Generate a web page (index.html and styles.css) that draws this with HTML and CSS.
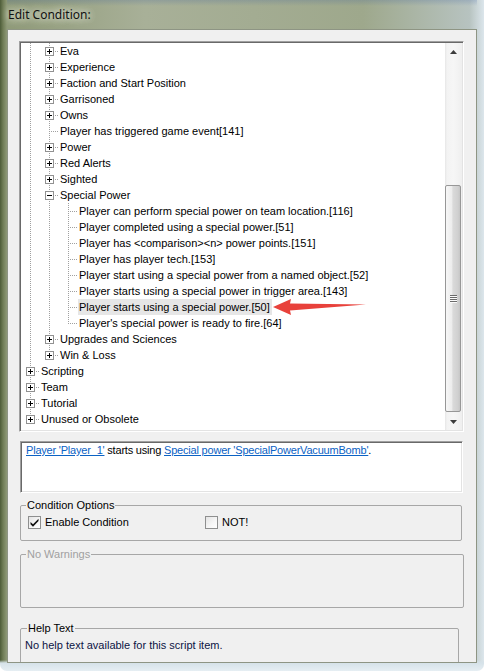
FILE: index.html
```html
<!DOCTYPE html>
<html>
<head>
<meta charset="utf-8">
<title>Edit Condition</title>
<link rel="stylesheet" href="styles.css">
</head>
<body>
<div class="window">
  <div class="titlebar">Edit Condition:</div>
  <div class="client">
    <div class="tree">
      <div class="tree-list">
        <div class="row"><span class="c v"></span><span class="c t"><i class="bx p"></i></span><span class="lb">Eva</span></div>
        <div class="row"><span class="c v"></span><span class="c t"><i class="bx p"></i></span><span class="lb">Experience</span></div>
        <div class="row"><span class="c v"></span><span class="c t"><i class="bx p"></i></span><span class="lb">Faction and Start Position</span></div>
        <div class="row"><span class="c v"></span><span class="c t"><i class="bx p"></i></span><span class="lb">Garrisoned</span></div>
        <div class="row"><span class="c v"></span><span class="c t"><i class="bx p"></i></span><span class="lb">Owns</span></div>
        <div class="row"><span class="c v"></span><span class="c t"></span><span class="lb">Player has triggered game event[141]</span></div>
        <div class="row"><span class="c v"></span><span class="c t"><i class="bx p"></i></span><span class="lb">Power</span></div>
        <div class="row"><span class="c v"></span><span class="c t"><i class="bx p"></i></span><span class="lb">Red Alerts</span></div>
        <div class="row"><span class="c v"></span><span class="c t"><i class="bx p"></i></span><span class="lb">Sighted</span></div>
        <div class="row"><span class="c v"></span><span class="c t"><i class="bx m"></i></span><span class="lb">Special Power</span></div>
        <div class="row"><span class="c v"></span><span class="c v"></span><span class="c t"></span><span class="lb">Player can perform special power on team location.[116]</span></div>
        <div class="row"><span class="c v"></span><span class="c v"></span><span class="c t"></span><span class="lb">Player completed using a special power.[51]</span></div>
        <div class="row"><span class="c v"></span><span class="c v"></span><span class="c t"></span><span class="lb">Player has &lt;comparison&gt;&lt;n&gt; power points.[151]</span></div>
        <div class="row"><span class="c v"></span><span class="c v"></span><span class="c t"></span><span class="lb">Player has player tech.[153]</span></div>
        <div class="row"><span class="c v"></span><span class="c v"></span><span class="c t"></span><span class="lb">Player start using a special power from a named object.[52]</span></div>
        <div class="row"><span class="c v"></span><span class="c v"></span><span class="c t"></span><span class="lb">Player starts using a special power in trigger area.[143]</span></div>
        <div class="row"><span class="c v"></span><span class="c v"></span><span class="c t"></span><span class="lb sel">Player starts using a special power.[50]</span></div>
        <div class="row"><span class="c v"></span><span class="c v"></span><span class="c e"></span><span class="lb">Player's special power is ready to fire.[64]</span></div>
        <div class="row"><span class="c v"></span><span class="c t"><i class="bx p"></i></span><span class="lb">Upgrades and Sciences</span></div>
        <div class="row"><span class="c v"></span><span class="c e"><i class="bx p"></i></span><span class="lb">Win &amp; Loss</span></div>
        <div class="row"><span class="c t"><i class="bx p"></i></span><span class="lb">Scripting</span></div>
        <div class="row"><span class="c t"><i class="bx p"></i></span><span class="lb">Team</span></div>
        <div class="row"><span class="c t"><i class="bx p"></i></span><span class="lb">Tutorial</span></div>
        <div class="row"><span class="c e"><i class="bx p"></i></span><span class="lb">Unused or Obsolete</span></div>
      </div>
      <div class="vscroll">
        <div class="sb-btn"><svg width="7" height="4" viewBox="0 0 7 4"><polygon points="0,4 3.5,0 7,4" fill="#3c3c3c"/></svg></div>
        <div class="sb-track"><div class="sb-thumb"><span class="grip"></span></div></div>
        <div class="sb-btn"><svg width="7" height="4" viewBox="0 0 7 4"><polygon points="0,0 7,0 3.5,4" fill="#3c3c3c"/></svg></div>
      </div>
    </div>

    <div class="desc"><a class="lnk">Player 'Player_1'</a> starts using <a class="lnk">Special power 'SpecialPowerVacuumBomb'</a>.</div>

    <fieldset class="group opts">
      <legend>Condition Options</legend>
      <div class="checks">
        <label class="chk first"><span class="box on"><svg width="11" height="11" viewBox="0 0 11 11"><path d="M1.5 5 L1.5 7.2 L4 9.7 L9.5 4 L9.5 1.8 L4 7.3 Z" fill="#111"/></svg></span>Enable Condition</label>
        <label class="chk"><span class="box"></span>NOT!</label>
      </div>
    </fieldset>

    <fieldset class="group warn">
      <legend>No Warnings</legend>
    </fieldset>

    <fieldset class="group help">
      <legend>Help Text</legend>
      <p class="helptext">No help text available for this script item.</p>
    </fieldset>
  </div>
  <svg class="annot-arrow" width="100" height="20" viewBox="0 0 100 20">
    <polygon points="0,9 18,1 17,5.5 93,6.5 17,12.5 18,17" fill="#e8413b"/>
  </svg>
</div>
</body>
</html>
```

FILE: styles.css
```css
html, body {
  margin: 0;
  padding: 0;
  background: #ffffff;
}
body {
  width: 484px;
  height: 671px;
  overflow: hidden;
  font-family: "Liberation Sans", Arial, sans-serif;
  font-size: 11px;
  color: #000;
}
.window {
  position: relative;
  width: 484px;
  height: 671px;
  box-sizing: border-box;
  padding: 0 7px 8px 7px;
  border-radius: 0 0 7px 7px;
  background:
    linear-gradient(180deg, rgba(255,255,255,0) 0, rgba(255,255,255,0) 660px, rgba(214,226,233,1) 663px, rgba(230,238,243,1) 671px),
    linear-gradient(90deg, #4d5c38 0, #6f7c56 3px, #8f9a78 7px, #a8b098 30%, #9ea88c 75%, #b7c3c0 97%, #dce6ec 100%);
  display: flex;
  flex-direction: column;
}
.titlebar {
  height: 29px;
  flex: none;
  box-sizing: border-box;
  padding: 7px 0 0 1px;
  font-family: "Noto Sans", "Open Sans", sans-serif;
  font-size: 12px;
  line-height: 16px;
  color: #111;
  text-shadow: 0 0 6px #e8ecdf, 0 0 10px #e8ecdf;
  background: linear-gradient(180deg, rgba(40,80,160,0.18) 0, rgba(255,255,255,0) 6px);
}
.client {
  flex: 1;
  background: #f0f0f0;
  border: 1px solid #8e9584;
  overflow: hidden;
}

/* ---- tree ---- */
.tree {
  margin: 11px 0 0 11px;
  width: 445px;
  height: 391px;
  box-sizing: border-box;
  display: flex;
  background: #fff;
  border-top: 1px solid #a0a0a0;
  border-left: 1px solid #a0a0a0;
  border-right: 1px solid #fff;
  border-bottom: 1px solid #fff;
  box-shadow: inset 1px 1px 0 #696969, inset -1px -1px 0 #e3e3e3;
  padding: 1px;
}
.tree-list {
  flex: 1;
  overflow: hidden;
}
.row {
  display: flex;
  height: 16px;
}
.c {
  position: relative;
  width: 19px;
  height: 16px;
  flex: none;
}
.c.v::before, .c.t::before, .c.e::before {
  content: "";
  position: absolute;
  left: 9px;
  top: 0;
  width: 1px;
  height: 16px;
  background: repeating-linear-gradient(180deg, #a0a0a0 0 1px, transparent 1px 2px);
}
.c.e::before { height: 9px; }
.c.t::after, .c.e::after {
  content: "";
  position: absolute;
  left: 10px;
  top: 8px;
  width: 9px;
  height: 1px;
  background: repeating-linear-gradient(90deg, transparent 0 1px, #a0a0a0 1px 2px);
}
.bx {
  position: absolute;
  left: 5px;
  top: 4px;
  width: 9px;
  height: 9px;
  box-sizing: border-box;
  border: 1px solid #919191;
  background: #fff;
  z-index: 1;
}
.bx::before {
  content: "";
  position: absolute;
  left: 1px;
  top: 3px;
  width: 5px;
  height: 1px;
  background: #000;
}
.bx.p::after {
  content: "";
  position: absolute;
  left: 3px;
  top: 1px;
  width: 1px;
  height: 5px;
  background: #000;
}
.lb {
  height: 16px;
  line-height: 16px;
  padding: 0 2px 0 1px;
  white-space: nowrap;
}
.lb.sel { background: #e6e6e6; }

/* ---- scrollbar ---- */
.vscroll {
  width: 17px;
  flex: none;
  display: flex;
  flex-direction: column;
  background: linear-gradient(90deg, #e6e6e6 0, #f3f3f3 2px, #f6f6f6 50%, #efefef 100%);
}
.sb-btn {
  height: 17px;
  flex: none;
  display: flex;
  align-items: center;
  justify-content: center;
}
.sb-track {
  flex: 1;
}
.sb-thumb {
  margin: 125px 0 0 0;
  width: 16px;
  height: 227px;
  box-sizing: border-box;
  border: 1px solid #979797;
  border-radius: 2px;
  background: linear-gradient(90deg, #f7f7f7 0, #ededed 40%, #dadada 50%, #d0d0d0 85%, #c6c6c6 100%);
  display: flex;
  align-items: center;
  justify-content: center;
}
.grip {
  width: 7px;
  height: 8px;
  background: repeating-linear-gradient(180deg, #6a6a6a 0 1px, #fbfbfb 1px 2px);
}

/* ---- description ---- */
.desc {
  margin: 9px 0 0 12px;
  width: 443px;
  height: 52px;
  box-sizing: border-box;
  background: #fff;
  border-top: 1px solid #a0a0a0;
  border-left: 1px solid #a0a0a0;
  border-right: 1px solid #fff;
  border-bottom: 1px solid #fff;
  box-shadow: inset 1px 1px 0 #696969, inset -1px -1px 0 #e3e3e3;
  padding: 2px 4px 0 5px;
  line-height: 13px;
  letter-spacing: -0.2px;
}
.lnk {
  color: #0b62c4;
  text-decoration: underline;
}

/* ---- group boxes ---- */
.group {
  margin: 0 0 0 12px;
  border: 1px solid #a7a7a7;
  border-radius: 2px;
  min-width: 0;
  box-sizing: border-box;
}
.group legend {
  padding: 0 1px;
  margin-left: -2px;
  line-height: 14px;
  font-size: 11px;
}
.opts {
  margin-top: 5px;
  width: 442px;
  height: 43px;
  padding: 4px 7px 0 7px;
}
.checks {
  display: flex;
  align-items: center;
}
.chk {
  display: flex;
  align-items: center;
  height: 13px;
  line-height: 13px;
}
.chk.first { width: 177px; }
.box {
  width: 13px;
  height: 13px;
  box-sizing: border-box;
  border: 1px solid #8e8f8f;
  background: linear-gradient(135deg, #e4e4e4 0, #f7f7f7 60%, #ffffff 100%);
  margin-right: 4px;
  display: flex;
}
.warn {
  margin-top: 6px;
  width: 444px;
  height: 61px;
  padding: 0 7px;
}
.warn legend { color: #a0a0a0; }
.help {
  margin-top: 13px;
  width: 439px;
  height: 70px;
  padding: 4px 4px 0 4px;
}
.help legend { margin-left: 2px; }
.helptext {
  margin: 0;
  line-height: 13px;
  color: #0c1444;
}

/* ---- annotation ---- */
.annot-arrow {
  position: absolute;
  left: 273px;
  top: 298px;
}
```
